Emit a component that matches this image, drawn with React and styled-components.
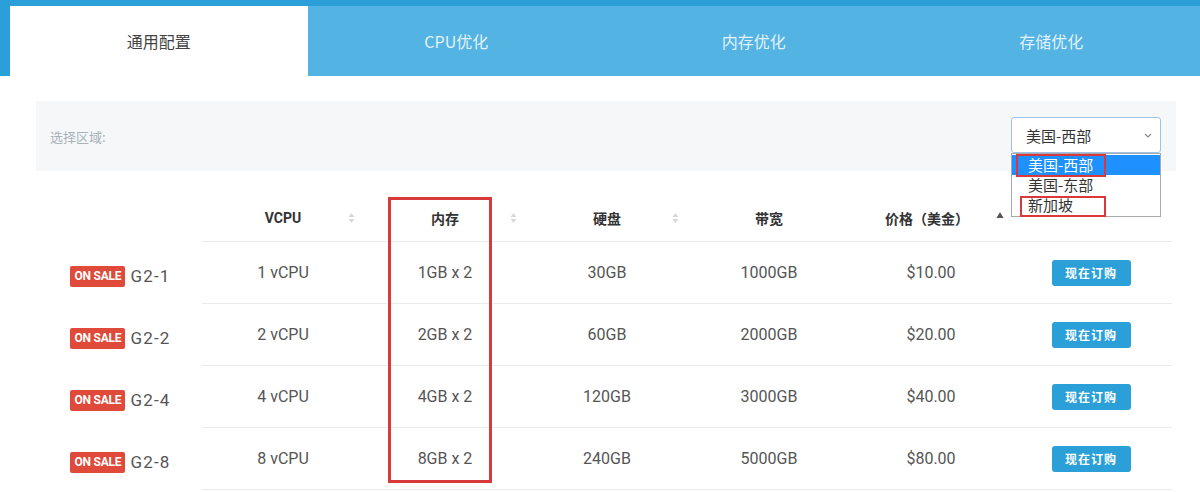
import React from 'react';
import styled, { createGlobalStyle } from 'styled-components';

const Global = createGlobalStyle`
  html, body { margin: 0; padding: 0; background: #fff; }
  body { font-family: Roboto, "Noto Sans CJK SC", sans-serif; color: #555; }
  * { box-sizing: border-box; }
`;

const CJK = `"Noto Sans CJK SC", "Noto Sans", sans-serif`;

const Page = styled.div`
  width: 1200px;
  height: 492px;
  overflow: hidden;
  background: #fff;
`;

const TabBar = styled.div`
  display: flex;
  height: 76px;
  padding: 6px 0 0 10px;
  background: #2a9fd8;
`;

const Tab = styled.div`
  flex: 1;
  display: flex;
  align-items: center;
  justify-content: center;
  background: ${(p) => (p.$active ? '#ffffff' : '#53b3e2')};
  color: ${(p) => (p.$active ? '#444' : '#e2f1fa')};
  font: 16px ${CJK};
`;

const Content = styled.div`
  padding: 25px 24px 0 36px;
`;

const FilterBar = styled.div`
  height: 70px;
  background: #f6f7f9;
  display: flex;
  align-items: center;
  justify-content: space-between;
  padding: 0 15px 0 14px;
`;

const FilterLabel = styled.span`
  font: 13px ${CJK};
  color: #a9b1b9;
`;

const SelectWrap = styled.div`
  position: relative;
  width: 150px;
  height: 36px;
  margin-top: -2px;
`;

const SelectBox = styled.div`
  height: 36px;
  border: 1px solid #9ec3ea;
  border-radius: 3px;
  background: #fff;
  display: flex;
  align-items: center;
  justify-content: space-between;
  padding: 0 8px 0 14px;
  font: 15px ${CJK};
  color: #333;
`;

const Dropdown = styled.div`
  position: absolute;
  top: 36px;
  left: 0;
  width: 150px;
  background: #fff;
  border: 1px solid #a9a9a9;
  padding: 1px 0 1px;
  z-index: 2;
`;

const Option = styled.div`
  height: 20px;
  padding-left: 16px;
  font: 15px/20px ${CJK};
  color: ${(p) => (p.$selected ? '#fff' : '#333')};
  background: ${(p) => (p.$selected ? '#1e90ff' : 'transparent')};
`;

const Mark = styled.div`
  position: absolute;
  border: 2px solid #d9393b;
  pointer-events: none;
`;

const Table = styled.div`
  position: relative;
  margin-top: 24px;
`;

const Row = styled.div`
  display: flex;
  height: ${(p) => (p.$head ? '47px' : '62px')};
`;

const NameCell = styled.div`
  width: 166px;
  flex: none;
  display: flex;
  align-items: center;
  justify-content: center;
  gap: 5px;
  padding: 6px 0 0 3px;
`;

const Cells = styled.div`
  display: grid;
  grid-template-columns: repeat(5, 162px) 160px;
  border-bottom: 1px solid #e9ecef;
`;

const HeadCell = styled.div`
  position: relative;
  display: flex;
  align-items: center;
  justify-content: center;
  font: bold 14px Roboto, ${CJK};
  color: #333;
  padding-right: ${(p) => p.$shift || 0}px;
`;

const SortIcon = styled.svg`
  position: absolute;
  right: ${(p) => p.$right || 9}px;
  top: 50%;
  transform: translateY(-50%);
`;

const Cell = styled.div`
  display: flex;
  align-items: center;
  justify-content: center;
  font: 16px Roboto, ${CJK};
  color: #555;
`;

const Badge = styled.span`
  display: inline-flex;
  align-items: center;
  height: 21px;
  padding: 0 4px;
  background: #e04a3a;
  color: #fff;
  border-radius: 2px;
  font: bold 12px Roboto, sans-serif;
  letter-spacing: -0.2px;
`;

const PlanName = styled.span`
  font: 17px Roboto, sans-serif;
  color: #555;
  letter-spacing: 1.2px;
`;

const BuyButton = styled.button`
  width: 79px;
  height: 26px;
  border: none;
  border-radius: 3px;
  background: #2a9fd8;
  color: #fff;
  font: bold 12px ${CJK};
  letter-spacing: 1px;
  padding: 0;
  margin-right: 2px;
`;

const ColumnMark = styled.div`
  position: absolute;
  left: 352px;
  top: 2px;
  width: 104px;
  height: 286px;
  border: 3px solid #d83a3a;
  pointer-events: none;
`;

const Both = ({ right }) => (
  <SortIcon $right={right} width="7" height="11" viewBox="0 0 7 11">
    <path d="M3.5 0.5 L6.5 4.5 L0.5 4.5 Z" fill="#d6d9dc" />
    <path d="M3.5 10.5 L6.5 6.5 L0.5 6.5 Z" fill="#d6d9dc" />
  </SortIcon>
);

const Asc = ({ right }) => (
  <SortIcon $right={right} width="8" height="7" viewBox="0 0 8 7" style={{ marginTop: -3 }}>
    <path d="M4 0.5 L7.5 6.5 L0.5 6.5 Z" fill="#555" />
  </SortIcon>
);

const tabs = ['通用配置', 'CPU优化', '内存优化', '存储优化'];

const plans = [
  ['G2-1', '1 vCPU', '1GB x 2', '30GB', '1000GB', '$10.00'],
  ['G2-2', '2 vCPU', '2GB x 2', '60GB', '2000GB', '$20.00'],
  ['G2-4', '4 vCPU', '4GB x 2', '120GB', '3000GB', '$40.00'],
  ['G2-8', '8 vCPU', '8GB x 2', '240GB', '5000GB', '$80.00'],
];

export default function App() {
  return (
    <Page>
      <Global />
      <TabBar>
        {tabs.map((t, i) => (
          <Tab key={t} $active={i === 0}>{t}</Tab>
        ))}
      </TabBar>
      <Content>
        <FilterBar>
          <FilterLabel>选择区域:</FilterLabel>
          <SelectWrap>
            <SelectBox>
              <span>美国-西部</span>
              <svg width="8" height="5" viewBox="0 0 8 5">
                <path d="M1 1 L4 4 L7 1" fill="none" stroke="#888" strokeWidth="1.2" />
              </svg>
            </SelectBox>
            <Dropdown>
              <Option $selected>美国-西部</Option>
              <Option>美国-东部</Option>
              <Option>新加坡</Option>
              <Mark style={{ left: 4, top: 0, width: 90, height: 23 }} />
              <Mark style={{ left: 8, top: 42, width: 86, height: 21 }} />
            </Dropdown>
          </SelectWrap>
        </FilterBar>
        <Table>
          <Row $head>
            <NameCell />
            <Cells>
              <HeadCell>VCPU<Both /></HeadCell>
              <HeadCell>内存<Both /></HeadCell>
              <HeadCell>硬盘<Both /></HeadCell>
              <HeadCell>带宽</HeadCell>
              <HeadCell $shift={8}>价格（美金）<Asc right={8} /></HeadCell>
              <HeadCell />
            </Cells>
          </Row>
          {plans.map(([name, ...vals]) => (
            <Row key={name}>
              <NameCell>
                <Badge>ON SALE</Badge>
                <PlanName>{name}</PlanName>
              </NameCell>
              <Cells>
                {vals.map((v, i) => (
                  <Cell key={i}>{v}</Cell>
                ))}
                <Cell><BuyButton>现在订购</BuyButton></Cell>
              </Cells>
            </Row>
          ))}
          <ColumnMark />
        </Table>
      </Content>
    </Page>
  );
}
